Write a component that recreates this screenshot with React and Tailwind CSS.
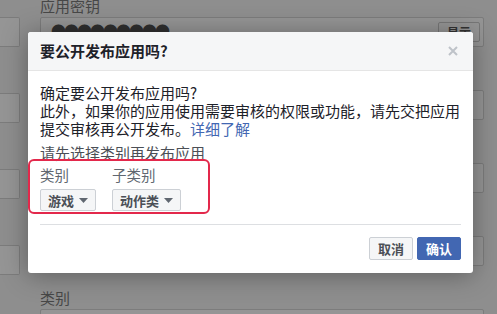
import React from 'react'

const font = { fontFamily: '"Noto Sans CJK SC", "Noto Sans", sans-serif' }

// faded page under the modal overlay
const Row = ({ label, first, children }) => (
  <div className={first ? 'mt-[-2px]' : 'mt-[24px]'}>
    <div className="h-[16px] text-[15px] leading-[16px] text-[#474747] whitespace-nowrap">{label}</div>
    <div className="mt-[3px] h-[30px] rounded-[2px] border border-[#7c7c7c] bg-[#959595] relative">
      {children}
    </div>
  </div>
)

const Dropdown = ({ children }) => (
  <button
    type="button"
    className="flex h-[22px] items-center gap-[5px] rounded-[2px] border border-[#ccd0d5] bg-[#f5f6f7] px-[7px] text-[13px] font-bold text-[#4b4f56]"
  >
    <span className="leading-none">{children}</span>
    <svg width="9" height="5" viewBox="0 0 9 5">
      <path d="M0 0h9L4.5 5z" fill="#606770" />
    </svg>
  </button>
)

export default function App() {
  return (
    <div className="relative h-[314px] w-[497px] overflow-hidden bg-[#8e8e8e]" style={font}>
      <div className="flex">
        <div className="w-[20px] shrink-0">
          {[0, 1, 2, 3].map(i => (
            <div key={i} className={i === 0 ? 'mt-[17px]' : 'mt-[46px]'}>
              <div className="h-[30px] rounded-r-[2px] border border-l-0 border-[#7c7c7c] bg-[#959595]" />
            </div>
          ))}
        </div>
        <div className="ml-[20px] w-[444px]">
          <Row label="应用密钥" first>
            <div className="absolute left-[10px] top-[2px] text-[15px] tracking-[-2px] text-[#2f2f2f]">●●●●●●●●●</div>
            <div className="absolute right-[3px] top-[4px] flex h-[20px] w-[42px] items-center justify-center rounded-[2px] border border-[#777] bg-[#959595] text-[12px] font-bold text-[#333]">
              显示
            </div>
          </Row>
          <Row label="" />
          <Row label="" />
          <Row label="" />
          <Row label="类别" />
        </div>
      </div>

      <div className="absolute left-[28px] top-[32px] w-[445px] overflow-hidden rounded-[3px] bg-white shadow-[0_2px_26px_rgba(0,0,0,0.35)]">
        <div className="flex h-[39px] items-center justify-between border-b border-[#e5e5e5] bg-[#f5f6f7] px-[12px]">
          <h3 className="text-[15px] font-bold text-[#1d2129]">要公开发布应用吗?</h3>
          <svg width="10" height="10" viewBox="0 0 10 10" className="mr-[3px]">
            <path d="M1 1l8 8M9 1l-8 8" stroke="#bec3c9" strokeWidth="2" />
          </svg>
        </div>

        <div className="px-[12px] pb-[13px] pt-[13px]">
          <div className="whitespace-nowrap text-[15px] leading-[18px] text-[#1d2129]">
            <div>确定要公开发布应用吗?</div>
            <div>此外，如果你的应用使用需要审核的权限或功能，请先交把应用</div>
            <div>
              提交审核再公开发布。<a href="#" className="text-[#4267b2]">详细了解</a>
            </div>
          </div>
          <div className="mt-[6px] text-[15px] leading-[18px] text-[#4b4f56]">请先选择类别再发布应用</div>

          <div className="mt-[4px] flex gap-[16px]">
            <div className="flex flex-col gap-[5px]">
              <span className="text-[14.5px] leading-[18px] text-[#606770]">类别</span>
              <Dropdown>游戏</Dropdown>
            </div>
            <div className="flex flex-col gap-[5px]">
              <span className="text-[14.5px] leading-[18px] text-[#606770]">子类别</span>
              <Dropdown>动作类</Dropdown>
            </div>
          </div>

          <div className="mt-[13px] border-t border-[#dddfe2]" />

          <div className="mt-[12px] flex justify-end gap-[4px]">
            <button type="button" className="h-[23px] w-[44px] rounded-[2px] border border-[#ccd0d5] bg-[#f5f6f7] text-[13px] font-bold text-[#4b4f56]">
              取消
            </button>
            <button type="button" className="h-[23px] w-[44px] rounded-[2px] border border-[#4267b2] bg-[#4267b2] text-[13px] font-bold text-white">
              确认
            </button>
          </div>
        </div>

        {/* annotation box drawn over the category pickers */}
        <div className="pointer-events-none absolute left-0 top-[127px] h-[55px] w-[182px] rounded-[6px] border-2 border-[#e3284b]" />
      </div>
    </div>
  )
}
